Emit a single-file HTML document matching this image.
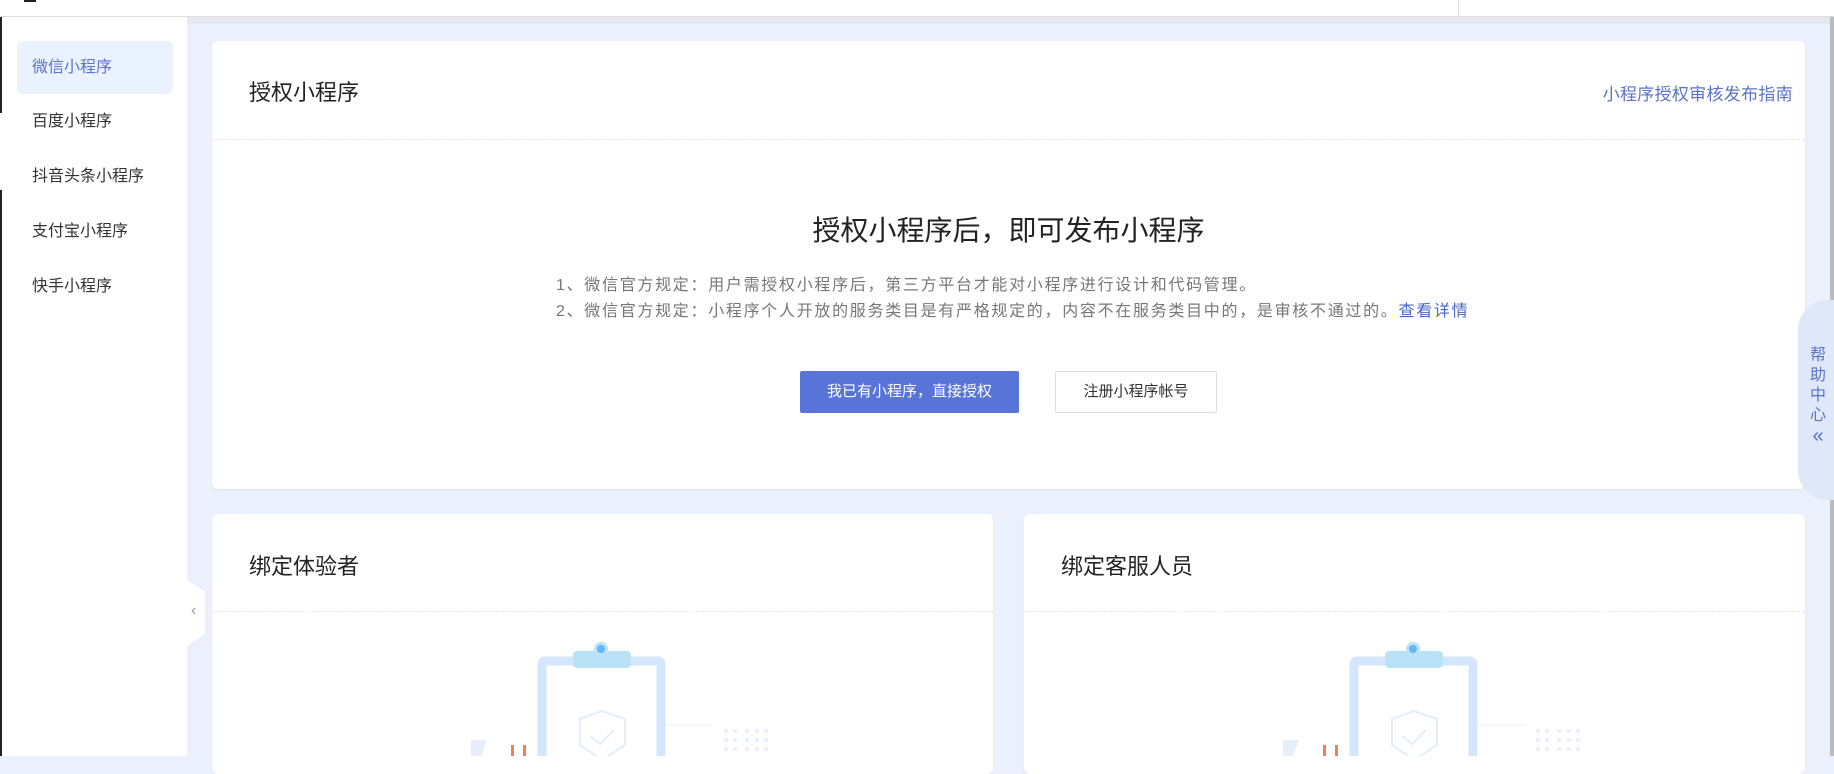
<!DOCTYPE html>
<html><head><meta charset="utf-8"><style>
*{margin:0;padding:0;box-sizing:border-box}
body{width:1834px;height:756px;overflow:hidden;background:#eaf1fc;font-family:"Liberation Sans","Noto Sans CJK SC",sans-serif;position:relative;color:#333}
.abs{position:absolute}
.top{left:0;top:0;width:1834px;height:17px;background:#fff;border-bottom:1px solid #ddd}
.band{left:187px;top:17px;width:1647px;height:7px;background:#e4e8ef}
.side{left:0;top:17px;width:187px;height:739px;background:#fff}
.item{position:absolute;left:17px;width:156px;height:53px;line-height:53px;padding-left:15px;font-size:16px;color:#333}
.card{background:#fff;border-radius:6px;box-shadow:0 1px 2px rgba(0,0,0,.06)}
.dash{position:absolute;left:0;right:0;border-top:1px dashed #e6e8ee}
.title{position:absolute;font-size:22px;color:#222}
</style></head><body>
<div class="abs top"></div>
<div class="abs" style="left:1458px;top:0;width:1px;height:17px;background:#ddd"></div>
<div class="abs" style="left:24px;top:0;width:12px;height:2px;background:#222"></div>
<div class="abs band"></div>
<div class="abs side">
 <div class="item" style="top:24px;background:#eaf2fe;border-radius:6px;color:#5b72d6">微信小程序</div>
 <div class="item" style="top:78px">百度小程序</div>
 <div class="item" style="top:133px">抖音头条小程序</div>
 <div class="item" style="top:188px">支付宝小程序</div>
 <div class="item" style="top:243px">快手小程序</div>
</div>
<div class="abs" style="left:0;top:17px;width:2px;height:96px;background:#222"></div>
<div class="abs" style="left:0;top:190px;width:2px;height:566px;background:#222"></div>
<div class="abs" style="left:1830px;top:17px;width:4px;height:739px;background:#bbb"></div>

<div class="abs card" style="left:212px;top:41px;width:1593px;height:448px">
 <div class="title" style="left:37px;top:34px">授权小程序</div>
 <div class="abs" style="right:12px;top:39px;font-size:17px;letter-spacing:0.3px;color:#5b72c8">小程序授权审核发布指南</div>
 <div class="dash" style="top:98px"></div>
 <div class="abs" style="left:0;width:1593px;top:168px;text-align:center;font-size:28px;color:#222">授权小程序后，即可发布小程序</div>
 <div class="abs" style="left:344px;top:232px;font-size:16px;letter-spacing:1.7px;color:#777;line-height:26px;white-space:nowrap">1、微信官方规定：用户需授权小程序后，第三方平台才能对小程序进行设计和代码管理。<br>2、微信官方规定：小程序个人开放的服务类目是有严格规定的，内容不在服务类目中的，是审核不通过的。<span style="color:#4a66c8">查看详情</span></div>
 <div class="abs" style="left:588px;top:330px;width:219px;height:42px;background:#5874d8;border-radius:2px;color:#fff;font-size:15px;line-height:42px;text-align:center">我已有小程序，直接授权</div>
 <div class="abs" style="left:843px;top:330px;width:162px;height:42px;border:1px solid #ddd;border-radius:2px;color:#333;font-size:15px;line-height:40px;text-align:center">注册小程序帐号</div>
</div>

<div class="abs" style="left:1798px;top:300px;width:36px;height:200px;background:#dfe8f8;border-radius:30px 0 0 30px"></div>
<div class="abs" style="left:1807px;top:346px;width:22px;font-size:16px;line-height:20px;color:#5b72c8;text-align:center">帮<br>助<br>中<br>心<br><span style="font-size:20px">«</span></div>

<div class="abs" style="left:187px;top:580px;width:18px;height:66px;background:#fff;clip-path:polygon(0 0,100% 12px,100% 54px,0 100%)"></div>
<div class="abs" style="left:191px;top:602px;font-size:16px;color:#999">‹</div>

<div class="abs card" style="left:212px;top:514px;width:781px;height:260px">
 <div class="title" style="left:37px;top:35px">绑定体验者</div>
 <div class="dash" style="top:97px"></div>
</div>
<div class="abs card" style="left:1024px;top:514px;width:781px;height:260px">
 <div class="title" style="left:37px;top:35px">绑定客服人员</div>
 <div class="dash" style="top:97px"></div>
</div>

<svg class="abs" style="left:0;top:0" width="1834" height="756">
 <g id="ill">
  <rect x="542" y="661" width="119" height="120" fill="none" stroke="#d3e6fb" stroke-width="9" rx="3"/>
  <rect x="573" y="651" width="58" height="17" rx="4" fill="#b9e2f7"/>
  <circle cx="601" cy="649" r="7" fill="#b9e2f7"/><circle cx="601" cy="649" r="4" fill="#63b5f5"/>
  <path d="M602 711 L625 719 V745 L602 760 L580 745 V719 Z" fill="none" stroke="#e3eefb" stroke-width="2"/>
  <path d="M590 736 L600 744 L614 730" fill="none" stroke="#e3eefb" stroke-width="2"/>
  <line x1="667" y1="725" x2="712" y2="725" stroke="#e8eef6"/>
  <g fill="#e9effb"><rect x="724" y="729" width="4" height="4"/><rect x="733" y="729" width="4" height="4"/><rect x="745" y="729" width="4" height="4"/><rect x="755" y="729" width="4" height="4"/><rect x="764" y="729" width="4" height="4"/>
  <rect x="724" y="738" width="4" height="4"/><rect x="733" y="738" width="4" height="4"/><rect x="745" y="738" width="4" height="4"/><rect x="755" y="738" width="4" height="4"/><rect x="764" y="738" width="4" height="4"/>
  <rect x="724" y="747" width="4" height="4"/><rect x="733" y="747" width="4" height="4"/><rect x="745" y="747" width="4" height="4"/><rect x="755" y="747" width="4" height="4"/><rect x="764" y="747" width="4" height="4"/></g>
  <path d="M471 740 L487 740 L481 756 L471 756Z" fill="#e6eef9"/>
  <rect x="511" y="745" width="3" height="11" fill="#f0805a"/><rect x="523" y="745" width="3" height="11" fill="#f0805a"/>
 </g>
 <use href="#ill" x="812"/>
</svg>
</body></html>
